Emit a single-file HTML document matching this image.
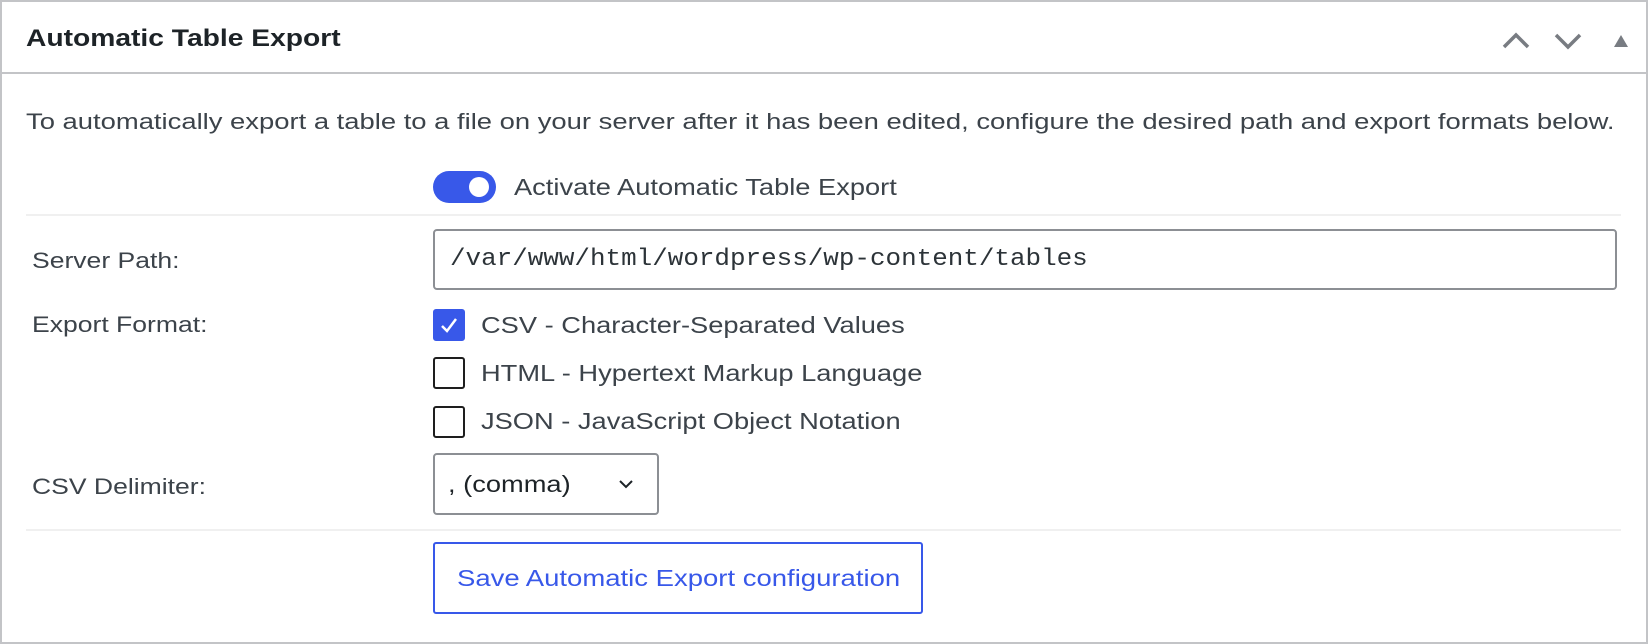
<!DOCTYPE html>
<html><head><style>
*{margin:0;padding:0;box-sizing:border-box}
body{width:1648px;height:644px;background:#fff;font-family:"Liberation Sans",sans-serif;color:#3c434a;position:relative;overflow:hidden}
.box{position:absolute;left:0;top:0;width:1648px;height:644px;border:2px solid #c3c4c7}
.a{position:absolute;white-space:nowrap;transform-origin:0 50%}
.hdr{position:absolute;left:0;top:72px;width:1648px;height:2px;background:#c3c4c7}
.sep{position:absolute;left:26px;width:1595px;height:2px;background:#f0f0f0}
.lbl{font-size:22.3px;color:#3c434a;transform:scaleX(1.19)}
.opt{font-size:23.3px;color:#3c434a;transform:scaleX(1.17)}
.cb{position:absolute;left:433px;width:32px;height:32px;border:2px solid #1e1e1e;border-radius:3px;background:#fff}
</style></head><body>
<div class="box"></div>
<div class="hdr"></div>
<div class="a" style="left:26px;top:25px;font-size:24.4px;font-weight:bold;color:#1d2327;transform:scaleX(1.157)">Automatic Table Export</div>
<svg class="a" style="left:1500px;top:27px" width="140" height="26" viewBox="0 0 140 26">
<path d="M4 20 L16 8 L28 20" fill="none" stroke="#787c82" stroke-width="3.5"/>
<path d="M56 8 L68 20 L80 8" fill="none" stroke="#787c82" stroke-width="3.5"/>
<path d="M114 20 L121 8 L128 20 Z" fill="#787c82"/>
</svg>
<div class="a" style="left:26px;top:109px;font-size:21.8px;transform:scaleX(1.257)">To automatically export a table to a file on your server after it has been edited, configure the desired path and export formats below.</div>
<div class="a" style="left:433px;top:171px;width:63px;height:32px;border-radius:16px;background:#3858e9"></div>
<div class="a" style="left:469px;top:177px;width:20px;height:20px;border-radius:50%;background:#fff"></div>
<div class="a opt" style="left:514px;top:174px">Activate Automatic Table Export</div>
<div class="sep" style="top:214px"></div>
<div class="a lbl" style="left:32px;top:248px">Server Path:</div>
<div class="a" style="left:433px;top:229px;width:1184px;height:61px;border:2px solid #8c8f94;border-radius:4px"></div>
<div class="a" style="left:450px;top:246px;font-family:'Liberation Mono',monospace;font-size:24px;color:#2c3338;transform:scaleX(1.08)">/var/www/html/wordpress/wp-content/tables</div>
<div class="a lbl" style="left:32px;top:312px">Export Format:</div>
<div class="cb" style="top:309px;background:#3858e9;border-color:#3858e9"></div>
<svg class="a" style="left:433px;top:309px" width="32" height="32"><path d="M9 17 L14 22 L23 10" fill="none" stroke="#fff" stroke-width="2.5"/></svg>
<div class="a opt" style="left:481px;top:312px">CSV - Character-Separated Values</div>
<div class="cb" style="top:357px"></div>
<div class="a opt" style="left:481px;top:360px">HTML - Hypertext Markup Language</div>
<div class="cb" style="top:406px"></div>
<div class="a opt" style="left:481px;top:408px">JSON - JavaScript Object Notation</div>
<div class="a lbl" style="left:32px;top:474px">CSV Delimiter:</div>
<div class="a" style="left:433px;top:453px;width:226px;height:62px;border:2px solid #8c8f94;border-radius:4px"></div>
<div class="a opt" style="left:448px;top:471px;color:#1d2327">, (comma)</div>
<svg class="a" style="left:618px;top:478px" width="16" height="12"><path d="M2 3 L8 9 L14 3" fill="none" stroke="#1d2327" stroke-width="2"/></svg>
<div class="sep" style="top:529px"></div>
<div class="a" style="left:433px;top:542px;width:490px;height:72px;border:2px solid #3858e9;border-radius:3px"></div>
<div class="a opt" style="left:457px;top:565px;color:#3858e9;transform:scaleX(1.18)">Save Automatic Export configuration</div>
</body></html>
